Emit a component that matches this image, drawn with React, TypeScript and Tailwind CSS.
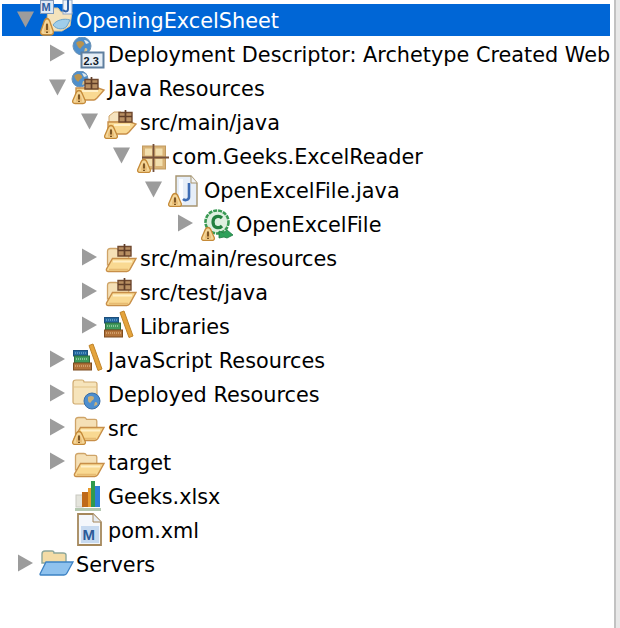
import React from "react";

const Warn = ({ x = 2, y = 20, s = 1 }: { x?: number; y?: number; s?: number }) => (
  <g transform={`translate(${x} ${y}) scale(1 ${s})`}>
    <path d="M7 .5c1.800 0 2.800 1.800 3.400 3.600l2.800 6.400c.6 1.800-.3 3-2.200 3H3c-1.900 0-2.800-1.200-2.200-3l2.800-6.400C4.200 2.300 5.200.5 7 .5z" fill="#f4d698" stroke="#c58a38" strokeWidth="1.300" />
    <path d="M7 3.500c2 2 3 5 3 8H4c0-3 1-6 3-8z" fill="#e9bc74" />
    <path d="M7 4.500v5" stroke="#6a4518" strokeWidth="1.700" />
    <path d="M6 11.400h2" stroke="#7a5422" strokeWidth="1.300" />
  </g>
);

const OpenFolder = ({ x = 0, y = 0 }: { x?: number; y?: number }) => (
  <g transform={`translate(${x} ${y})`}>
    <path d="M3.500 20V6.500C3.500 4.500 4.500 3.500 6.500 3.500h5.500c1.400 0 2 .8 2.500 1.800h8.500c1.200 0 1.800.6 1.800 1.800V14z" fill="#f5e0b6" stroke="#cfa468" strokeWidth="1.300" />
    <path d="M2.500 24c-.5 1.500.3 2.500 1.800 2.500h18.500c1.500 0 2.300-.7 3-1.800L32 13.500H8.500z" fill="#f9d992" stroke="#c88f49" strokeWidth="1.400" />
    <path d="M9 16.500h19" stroke="#fff0c8" strokeWidth="2" />
    <path d="M5 24.500h19" stroke="#e7bb72" strokeWidth="1.600" />
  </g>
);

const Pkg = ({ x = 14, y = 5 }: { x?: number; y?: number }) => (
  <g transform={`translate(${x} ${y})`}>
    <path d="M1 2.500h13V12H1z" fill="#b88f62" stroke="#70492f" strokeWidth="1.400" />
    <path d="M7.500 0v12M1 6.500h13" stroke="#5f3d28" strokeWidth="1.700" />
  </g>
);

const Globe = ({ x = 4, y = 1, r = 8 }: { x?: number; y?: number; r?: number }) => (
  <g transform={`translate(${x} ${y})`}>
    <circle cx={r} cy={r} r={r} fill="#4f8fcb" stroke="#6d93b5" strokeWidth="1" />
    <path d={`M${r - 5} ${r - 4}c3-2 6-1 7 1s-2 3-3 5-3-1-4-3 -1-2 0-3z`} fill="#b8934f" />
    <path d={`M${r + 2} ${r - 6}c2 0 4 1 5 3l-3 1z`} fill="#dfe9ee" />
    <path d={`M${r + 3} ${r + 2}c2 0 3 1 2 3l-3 1z`} fill="#d9c08a" />
  </g>
);

const Books = ({ x = 2, y = 6 }: { x?: number; y?: number }) => (
  <g transform={`translate(${x} ${y})`}>
    <rect x="1.500" y="6.500" width="14" height="5.500" fill="#23679f" stroke="#1d4f7c" />
    <path d="M3 9h11" stroke="#8fc0e0" strokeWidth="1" strokeDasharray="1 1" />
    <rect x="2.500" y="12" width="15" height="7" fill="#3f9a5c" stroke="#2f6d3d" />
    <path d="M4 15h12" stroke="#d4ecd4" strokeWidth="1.200" strokeDasharray="1 1" />
    <rect x="1.500" y="19" width="18" height="7" fill="#b2733a" stroke="#7d4d20" />
    <path d="M3 22h15" stroke="#ecc899" strokeWidth="1.200" strokeDasharray="1 1" />
    <path d="M17 1.500 21 0l9 25-4 1.500z" fill="#e5a43c" stroke="#c0842a" strokeWidth="1" />
  </g>
);

const icons: Record<string, React.ReactNode> = {
  project: (
    <>
      <path d="M10 5h10l3 4h11l-2 14-8 5H8z" fill="#f4e3bd" stroke="#d8c498" strokeWidth="1" />
      <rect x="2.500" y="-2.500" width="13" height="13" fill="#dfe8f4" stroke="#7f98ba" />
      <text x="3.600" y="8" fontSize="11" fontWeight="700" fill="#2f5f9f" fontFamily="Liberation Sans, sans-serif">M</text>
      <rect x="25" y="-3" width="9" height="14" fill="#eef2f8" stroke="#8ea6c4" />
      <path d="M30 -3v9c0 3-3 3-5 1" fill="none" stroke="#2f62a8" strokeWidth="2" />
      <path d="M15 22c3-5 11-7 17-5l-3 6c-3 4-10 4-14-1z" fill="#9fcdea" stroke="#6aa4cc" />
      <Warn x={2} y={15} s={1.250} />
    </>
  ),
  descriptor: (
    <>
      <Globe x={3} y={0} r={9} />
      <rect x="11.500" y="15.500" width="22" height="15" fill="#e6eef6" stroke="#5f7f9f" strokeWidth="2" />
      <text x="13.500" y="27.500" fontSize="11" fontWeight="700" fill="#111c2a" fontFamily="Liberation Sans, sans-serif">2.3</text>
    </>
  ),
  javares: (
    <>
      <Globe x={2} y={0} r={8} />
      <path d="M6 17h22l6 2-7 8c-1 1-2 2-3 2H6z" fill="#f9d992" stroke="#c88f49" strokeWidth="1.400" />
      <path d="M12 20h16" stroke="#fff0c8" strokeWidth="2" />
      <Pkg x={14} y={6} />
      <Warn x={2} y={19} />
    </>
  ),
  srcfolder: (
    <>
      <path d="M7 17v-6l5-4h7v10z" fill="#f5e3bf" stroke="#cfa468" />
      <path d="M6 17h22l6 2-7 8c-1 1-2 2-3 2H6z" fill="#f9d992" stroke="#c88f49" strokeWidth="1.400" />
      <path d="M12 20h16" stroke="#fff0c8" strokeWidth="2" />
      <Pkg x={16} y={5} />
      <Warn x={2} y={20} />
    </>
  ),
  pkg: (
    <>
      <rect x="8.500" y="7" width="23" height="23" fill="#d9b377" stroke="#c19a5f" />
      <rect x="11" y="9.500" width="7" height="7" fill="#f2dfae" />
      <rect x="21.500" y="9.500" width="7" height="7" fill="#f2dfae" />
      <rect x="11" y="20" width="7" height="7" fill="#f2dfae" />
      <rect x="21.500" y="20" width="7" height="7" fill="#f2dfae" />
      <path d="M19.500 5v28M8 18.500h27" stroke="#75513a" strokeWidth="1.800" />
      <Warn x={3} y={20} />
    </>
  ),
  java: (
    <>
      <path d="M10 3h15l6 7v23H10z" fill="#e6eef8" stroke="#a6946f" strokeWidth="1.400" />
      <path d="M13 6h4v24h-4z" fill="#fafcff" />
      <path d="M25 3v7h6" fill="#f0f2f4" stroke="#a6946f" strokeWidth="1" />
      <path d="M23 10v14c0 3-4 4-6 2" fill="none" stroke="#3d6cb4" strokeWidth="2.600" />
      <Warn x={2} y={20} />
    </>
  ),
  cls: (
    <>
      <circle cx="19" cy="15" r="11.500" fill="#dff0e0" stroke="#3a9a54" strokeWidth="2.600" strokeDasharray="4 1" />
      <path d="M24 11c-3-3-9-2-9 4s6 7 9 4" fill="none" stroke="#23803f" strokeWidth="3.200" />
      <path d="M21 24l5 2 3-3 6 5-6 3-3-1-5 1z" fill="#2fa05a" stroke="#1f7a42" strokeWidth=".8" />
      <Warn x={3} y={20} />
    </>
  ),
  resfolder: <><OpenFolder x={2} y={4} /><Pkg x={15} y={3} /></>,
  lib: <Books x={1} y={2} />,
  jslib: <Books x={2} y={1} />,
  deployed: (
    <>
      <path d="M3 6c0-2 1-3 3-3h6c1 0 2 1 2 2h11c1 0 2 1 2 2v20H5c-1 0-2-1-2-2z" fill="#f6e4bb" stroke="#cfa96e" strokeWidth="1.200" />
      <path d="M4 10h23" stroke="#e3c488" />
      <circle cx="22" cy="24" r="8" fill="#4d8fd0" stroke="#3a6ea4" />
      <path d="M18 20c3-2 6-1 6 1s-2 2-3 4-3 0-3-2zM25 25c2 0 3 1 2 3l-3 1z" fill="#c9b07a" />
    </>
  ),
  src: (
    <>
      <OpenFolder x={2} y={3} />
      <Warn x={2} y={20} />
    </>
  ),
  target: <OpenFolder x={2} y={5} />,
  xlsx: (
    <>
      <rect x="6" y="16" width="7" height="12" fill="#e4e4dc" stroke="#c8c8c0" />
      <rect x="12" y="13" width="6" height="15" fill="#bf6a1a" />
      <rect x="18" y="9" width="4" height="19" fill="#e89a2c" />
      <rect x="21" y="2" width="4" height="26" fill="#2f9a4e" />
      <rect x="25" y="7" width="5" height="21" fill="#2e7fd8" />
      <rect x="5" y="29" width="26" height="3" fill="#b4c8b0" />
    </>
  ),
  pom: (
    <>
      <path d="M8 1h15l8 8v23H8z" fill="#f4f7fb" stroke="#a5885c" strokeWidth="1.800" />
      <path d="M23 1v8h8" fill="#e7ecf2" stroke="#a5885c" strokeWidth="1" />
      <rect x="11" y="13" width="18" height="17" fill="#c7daf0" />
      <text x="12.500" y="27" fontSize="15" fontWeight="700" fill="#2c5a98" fontFamily="Liberation Sans, sans-serif">M</text>
    </>
  ),
  servers: (
    <>
      <path d="M4 7c0-2 1-3 3-3h7c1 0 2 1 2 2h9c2 0 3 1 3 2v8H4z" fill="#f3dca6" stroke="#8ea79a" strokeWidth="1.400" />
      <path d="M2 27 8 15h27l-6 11c-1 2-2 2-3 2H4c-2 0-2 0-2-1z" fill="#8fc2ee" stroke="#3d82c4" strokeWidth="1.300" />
    </>
  ),
};

type Item = { d: number; a?: "r" | "d"; i: string; t: string; sel?: boolean };

const items: Item[] = [
  { d: 0, a: "d", i: "project", t: "OpeningExcelSheet", sel: true },
  { d: 1, a: "r", i: "descriptor", t: "Deployment Descriptor: Archetype Created Web" },
  { d: 1, a: "d", i: "javares", t: "Java Resources" },
  { d: 2, a: "d", i: "srcfolder", t: "src/main/java" },
  { d: 3, a: "d", i: "pkg", t: "com.Geeks.ExcelReader" },
  { d: 4, a: "d", i: "java", t: "OpenExcelFile.java" },
  { d: 5, a: "r", i: "cls", t: "OpenExcelFile" },
  { d: 2, a: "r", i: "resfolder", t: "src/main/resources" },
  { d: 2, a: "r", i: "resfolder", t: "src/test/java" },
  { d: 2, a: "r", i: "lib", t: "Libraries" },
  { d: 1, a: "r", i: "jslib", t: "JavaScript Resources" },
  { d: 1, a: "r", i: "deployed", t: "Deployed Resources" },
  { d: 1, a: "r", i: "src", t: "src" },
  { d: 1, a: "r", i: "target", t: "target" },
  { d: 1, i: "xlsx", t: "Geeks.xlsx" },
  { d: 1, i: "pom", t: "pom.xml" },
  { d: 0, a: "r", i: "servers", t: "Servers" },
];

const Arrow = ({ a }: { a?: "r" | "d" }) => (
  <svg width="18" height="34" viewBox="0 0 18 34" className="shrink-0 overflow-visible">
    {a === "r" && <path d="M1 7.500 16 16 1 24.500z" fill="#9c9c9c" />}
    {a === "d" && <path d="M0 8.500h17L8.500 24.500z" fill="#9c9c9c" />}
  </svg>
);

export default function App() {
  return (
    <div className="relative flex h-[628px] w-[620px] overflow-hidden bg-white font-['DejaVu_Sans','Liberation_Sans',sans-serif]">
      <div className="absolute left-[2px] top-[4px] h-[32px] w-[608px] bg-[#0066d6]" />
      <div className="relative w-[614px] shrink-0 overflow-hidden pl-[2px] pt-[3px] pr-[4px]">
        {items.map((it, n) => (
          <div
            key={n}
            className={`flex h-[34px] w-[609px] items-center whitespace-nowrap text-[20.800px] ${it.sel ? "text-white" : "overflow-hidden text-black"}`}
            style={{ paddingLeft: 15 + 32 * it.d }}
          >
            <Arrow a={it.a} />
            <svg width="36" height="34" viewBox="0 0 36 34" className="ml-[3px] shrink-0 overflow-visible">
              {icons[it.i]}
            </svg>
            <span className="ml-[2px] pt-[2px] leading-[32px]">{it.t}</span>
          </div>
        ))}
      </div>
      <div className="h-full w-[2px] shrink-0 bg-[#c2c2c2]" />
      <div className="h-full w-[4px] shrink-0 bg-[#e8e8e8]" />
    </div>
  );
}
